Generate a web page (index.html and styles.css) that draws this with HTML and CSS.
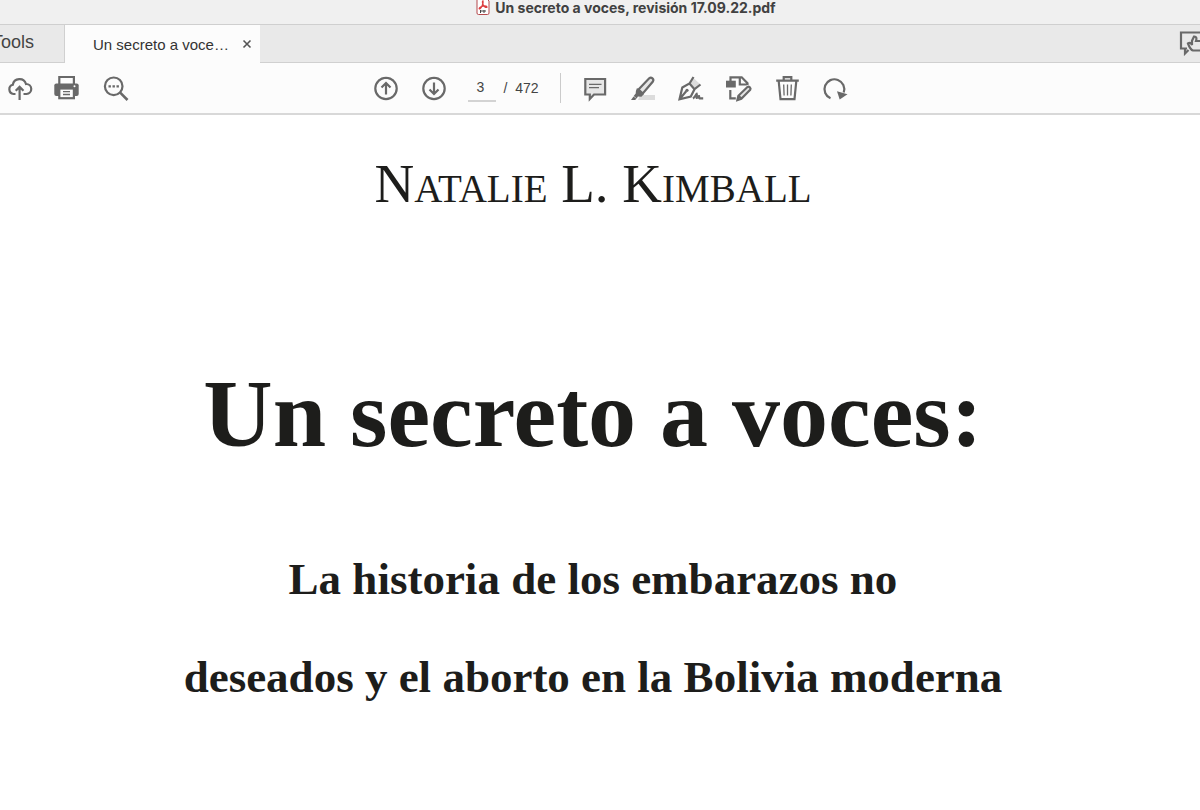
FILE: index.html
```html
<!DOCTYPE html>
<html lang="es">
<head>
  <meta charset="UTF-8">
  <meta name="viewport" content="width=device-width, initial-scale=1.0">
  <title>Un secreto a voces, revisión 17.09.22.pdf</title>
  <link rel="stylesheet" href="styles.css">
</head>
<body>

  <header class="titlebar">
    <svg class="pdf-icon" viewBox="0 0 14 18">
      <path d="M1 -1h9l3 3v12a1.500 1.500 0 0 1-1.500 1.500h-9A1.500 1.500 0 0 1 1 14z" fill="#fff" stroke="#b5494c"/>
      <path d="M7 2c-1 0-.4 3 .4 4.500 1 1.800 3.600 2.500 3.600 1.400S7.500 6.500 5 7.900 3 10 4 9.800 7.700 4.500 7 2z" fill="none" stroke="#dc3e40" stroke-width="1.300"/>
      <path d="M4 12h6M4.500 11v3M8 11v3" stroke="#444"/>
    </svg>
    <span>Un secreto a voces, revisión 17.09.22.pdf</span>
  </header>

  <nav class="tabs">
    <button class="tools-tab">Tools</button>
    <div class="doc-tab">
      <button class="doc-name">Un secreto a voce…</button>
      <button class="close" aria-label="Cerrar">
        <svg viewBox="0 0 10 10"><path d="M1.500 1.500l7 7M8.500 1.500l-7 7"/></svg>
      </button>
    </div>
    <div class="tab-space">
      <button class="icon-btn feedback" aria-label="Comentarios">
        <svg viewBox="0 0 28 28">
          <path d="M9 20.500H3V4.500h22v6M7 20.500v5l3.500-3.500"/>
          <path d="M14 12.800l2-4.300c2.500-.2 2.800 1.800 2 4.500h6.500v9.500H15c-2-.5-3.500-3-5-7 1.800-1.300 3-.5 4 1.500z"/>
        </svg>
      </button>
    </div>
  </nav>

  <div class="toolbar">
    <div class="group files">
      <button class="icon-btn" aria-label="Subir">
        <svg viewBox="0 0 28 28">
          <path d="M9.500 20H7.500A4.700 4.700 0 0 1 6.800 10.800 6.800 6.800 0 0 1 20 10a5 5 0 0 1 .5 10h-3M13.600 26V13M9.700 16.800l3.900-3.900 3.900 3.900"/>
        </svg>
      </button>
      <button class="icon-btn" aria-label="Imprimir">
        <svg viewBox="0 0 28 28">
          <path d="M7.300 10V3h14.600v7"/>
          <rect class="solid" x="2.300" y="9.500" width="24.400" height="12.500" rx="2"/>
          <rect class="paper" x="7.300" y="14.500" width="14.600" height="9.700"/>
          <path class="thin" d="M11 17.600h7M11 20.500h7"/>
          <circle cx="22.500" cy="12.200" r="1" fill="#fff" stroke="none"/>
        </svg>
      </button>
      <button class="icon-btn zoom-btn" aria-label="Buscar">
        <svg viewBox="0 0 28 28">
          <circle cx="11.700" cy="12.300" r="8.800"/>
          <path d="M18.200 18.700l7.300 7.300" stroke-width="2.600"/>
          <path class="solid" d="M6.500 11.200h2.400v2.400H6.500zM10.500 11.200h2.400v2.400h-2.400zM14.500 11.200h2.400v2.400h-2.400z"/>
        </svg>
      </button>
    </div>

    <div class="group main-tools">
      <button class="icon-btn" aria-label="Página anterior">
        <svg viewBox="0 0 28 28"><circle cx="14" cy="14.500" r="10.700"/><path d="M14 20.500V9M9.500 13.500L14 9l4.500 4.500"/></svg>
      </button>
      <button class="icon-btn" aria-label="Página siguiente">
        <svg viewBox="0 0 28 28"><circle cx="14" cy="14.500" r="10.700"/><path d="M14 8.500V20M9.500 15.500L14 20l4.500-4.500"/></svg>
      </button>
      <div class="pager">
        <input type="text" id="page" value="3" aria-label="Página">
        <label for="page">/&nbsp; 472</label>
      </div>
      <span class="divider"></span>
      <button class="icon-btn" aria-label="Nota">
        <svg viewBox="0 0 28 28">
          <path class="tint" d="M4.300 5h19.800v15.500H13l-4.200 4.500v-4.500H4.300z"/>
          <path class="thin" d="M8 10.300h12.500M8 13.700h10"/>
        </svg>
      </button>
      <button class="icon-btn" aria-label="Resaltar">
        <svg viewBox="0 0 28 28">
          <path d="M11 21h15v5H9z" fill="#dcdcdc" stroke="none"/>
          <path class="tint" d="M9.500 15.500L20.200 4.300c2.200-1.800 5.200.8 3.700 3.200L13.800 19.500z"/>
          <path class="solid" d="M8 14l7 6-2.600 2.800-3.500-.2-1.200 1.800-3-2.400 2-2.400.2-2.700zM4.500 22.500l3 2.300L6 26H2z"/>
        </svg>
      </button>
      <button class="icon-btn" aria-label="Firmar">
        <svg viewBox="0 0 28 28">
          <path d="M16.500 4l6.500 6-4.500 4.500-5.500-5z" fill="#dcdcdc" stroke="none"/>
          <path d="M16.500 3l-4 6.500-7.200 4L2.500 25.200 13.800 22.500l3.700-7.300 6-4.700M12.500 9.500l5 5.700M2.500 25.200l6.700-8"/>
          <circle class="solid" cx="10" cy="16.300" r="1.600"/>
          <path d="M16 24.500c1.500-1 3-4 3.700-4.500.5 1-.7 3.500 0 4 .8 0 1.500-2 2.300-2 .4.500-.2 2 .4 2.300h3.800"/>
        </svg>
      </button>
      <button class="icon-btn" aria-label="Editar">
        <svg viewBox="0 0 28 28">
          <rect class="solid" x="1" y="6.700" width="9.800" height="6.800"/>
          <path d="M5.500 7V3.300h11.200l5.800 6V11M14.800 3.500v7h7M5.300 16v8.300h5.500"/>
          <path class="tint" d="M12.400 26l1-4.300 9-8.700c1.500-1 4 1.200 2.800 2.800l-8.900 8.900zM13.500 21.700l3 3"/>
        </svg>
      </button>
      <button class="icon-btn" aria-label="Eliminar">
        <svg viewBox="0 0 28 28">
          <path d="M3.200 6.700h22.600M10.700 6V3.200h7.600V6M5.700 7l1.800 18.200h14L23.300 7"/>
          <path class="thin" d="M10.700 10.500l.4 11M14.500 10.500v11M18.300 10.500l-.4 11"/>
        </svg>
      </button>
      <button class="icon-btn" aria-label="Girar">
        <svg viewBox="0 0 28 28">
          <path d="M9.500 24.300A9.900 9.900 0 1 1 22.700 18.500"/>
          <path class="solid" d="M16 17.200l10.500 3-7.800 5.300z"/>
        </svg>
      </button>
    </div>
  </div>

  <main class="page">
    <p class="author">Natalie L. Kimball</p>
    <h1>Un secreto a voces:</h1>
    <h2>La historia de los embarazos no<br>deseados y el aborto en la Bolivia moderna</h2>
  </main>

</body>
</html>
```
FILE: styles.css
```css
body {
  margin: 0;
  background-color: #fff;
  color: #1d1d1b;
  font-family: "Liberation Sans", Arial, sans-serif;
  overflow-x: hidden;
}

button {
  padding: 0;
  border: none;
  background: none;
  font-family: inherit;
  color: inherit;
  cursor: pointer;
}

.titlebar {
  display: flex;
  justify-content: center;
  align-items: center;
  gap: 5px;
  height: 16px;
  padding: 0 0 8px 52px;
  background-color: #f0f0f0;
  border-bottom: 1px solid #cfcfcf;
  color: #414141;
  font: bold 14px/16px Inter, sans-serif;
}

.pdf-icon {
  width: 14px;
  height: 18px;
}

/* tabs */
.tabs {
  display: flex;
  height: 38px;
  background-color: #e9e9e9;
  overflow: hidden;
}

.tools-tab {
  display: flex;
  justify-content: flex-end;
  width: 65px;
  padding: 7px 30px 0 0;
  box-sizing: border-box;
  border-right: 1px solid #d0d0d0;
  border-bottom: 1px solid #d0d0d0;
  font-size: 18px;
  line-height: 20px;
  color: #444;
}

.doc-tab {
  display: flex;
  justify-content: space-between;
  align-items: center;
  width: 195px;
  padding: 0 8px 0 28px;
  box-sizing: border-box;
  background-color: #fcfcfc;
  color: #333;
}

.doc-name {
  font-size: 15px;
}

.close {
  width: 10px;
  height: 10px;
}

.close svg {
  display: block;
  fill: none;
  stroke: #555;
  stroke-width: 1.6;
}

.tab-space {
  display: flex;
  flex: 1;
  justify-content: flex-end;
  border-bottom: 1px solid #d0d0d0;
}

.feedback {
  margin: 3px -6px 0 0;
}

/* toolbar */
.toolbar {
  display: grid;
  grid-template-columns: 1fr auto 1fr;
  align-items: center;
  height: 50px;
  padding-left: 6px;
  background-color: #fcfcfc;
  border-bottom: 2px solid #d8d8d8;
}

.group {
  display: flex;
  align-items: center;
  gap: 20px;
}

.files {
  gap: 18px;
}

.zoom-btn {
  margin-left: 4px;
}

.main-tools {
  padding-left: 14px;
}

.icon-btn {
  width: 28px;
  height: 28px;
  flex: none;
}

.icon-btn svg {
  display: block;
  fill: none;
  stroke: #696969;
  stroke-width: 2.2;
}

.icon-btn .solid {
  fill: #696969;
  stroke: none;
}

.icon-btn .paper {
  fill: #fcfcfc;
}

.icon-btn .tint {
  fill: #e6e6e6;
}

.icon-btn .thin {
  stroke-width: 1.3;
}

.pager {
  display: flex;
  align-items: center;
  gap: 8px;
  width: 72px;
  font-size: 14px;
  color: #444;
  white-space: nowrap;
}

.pager input {
  width: 28px;
  height: 28px;
  padding: 0 2px 0 0;
  box-sizing: border-box;
  border: none;
  border-bottom: 2px solid #d3d3d3;
  background: none;
  font: inherit;
  color: inherit;
  text-align: center;
}

.divider {
  width: 1px;
  height: 30px;
  background-color: #cbcbcb;
}

/* document */
.page {
  padding: 39px 14px 40px 0;
  font-family: "Liberation Serif", "Times New Roman", serif;
  text-align: center;
}

.author {
  margin: 0;
  font-size: 55px;
  line-height: 60px;
  font-variant: small-caps;
}

h1 {
  margin: 140px 0 0;
  font-size: 96px;
  line-height: 120px;
}

h2 {
  margin: 56px 0 0;
  font-size: 45px;
  line-height: 98px;
}
```
